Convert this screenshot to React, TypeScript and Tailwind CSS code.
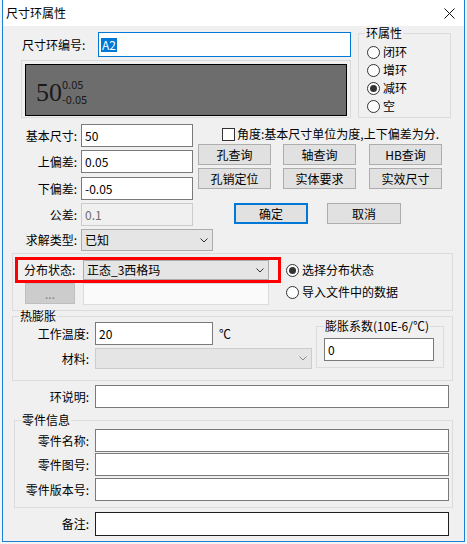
import React from 'react';

const Chevron: React.FC<{ color?: string }> = ({ color = '#333333' }) => (
  <svg width="8" height="5" viewBox="0 0 8 5" className="shrink-0">
    <path d="M0.5 0.5 L4 4 L7.5 0.5" fill="none" stroke={color} strokeWidth="1" />
  </svg>
);

const TextBox: React.FC<{ w: string; h?: string; value?: string; dark?: boolean }> = ({ w, h = 'h-[23px]', value, dark }) => (
  <div
    className={`${w} ${h} shrink-0 flex items-center pl-[3px] bg-white border ${dark ? 'border-[#1e1e1e]' : 'border-[#7a7a7a]'}`}
  >
    {value}
  </div>
);

const Combo: React.FC<{ w: string; h: string; value?: string; disabled?: boolean }> = ({ w, h, value, disabled }) => (
  <div
    className={`${w} ${h} shrink-0 flex items-center justify-between pl-[3px] pr-[4px] border ${
      disabled ? 'bg-[#e5e5e5] border-[#cccccc]' : 'bg-[#e5e5e5] border-[#acacac]'
    }`}
  >
    <span>{value}</span>
    <Chevron color={disabled ? '#8a8a8a' : '#333333'} />
  </div>
);

const Btn: React.FC<{ label: string; w?: string; primary?: boolean; className?: string }> = ({
  label,
  w = 'w-[73px]',
  primary,
  className = '',
}) => (
  <div
    className={`${w} h-[21px] shrink-0 flex items-center justify-center bg-[#e1e1e1] ${
      primary ? 'border-2 border-[#0078d7]' : 'border border-[#adadad]'
    } ${className}`}
  >
    {label}
  </div>
);

const Radio: React.FC<{ label: string; checked?: boolean; h: string }> = ({ label, checked, h }) => (
  <div className={`${h} flex items-center`}>
    <div className="w-[13px] h-[13px] rounded-full border border-[#333333] bg-white flex items-center justify-center shrink-0">
      {checked && <div className="w-[7px] h-[7px] rounded-full bg-[#333333]" />}
    </div>
    <span className="ml-[3px]">{label}</span>
  </div>
);

export default function App() {
  return (
    <div className="w-[467px] h-[544px] bg-[#f4f4f4] overflow-hidden font-['Noto_Sans_CJK_SC',sans-serif] text-[12px] leading-[14px] text-black">
      <div className="ml-[2px] w-[463px] h-[542px] flex flex-col border-x border-b border-[#1a7fd6]">
        {/* title bar */}
        <div className="h-[26px] shrink-0 bg-white flex items-center justify-between pl-[3px] pr-[9px]">
          <span className="text-[12px]">尺寸环属性</span>
          <svg width="11" height="11" viewBox="0 0 11 11">
            <path d="M0.5 0.5 L10.5 10.5 M10.5 0.5 L0.5 10.5" stroke="#111111" strokeWidth="1" />
          </svg>
        </div>

        <div className="flex-1 bg-[#f0f0f0]">
          {/* section A */}
          <div className="flex items-start h-[92px]">
            <div className="ml-[18px] w-[330px] pt-[6px]">
              <div className="flex items-center h-[25px]">
                <span className="w-[77px] pl-[1px] shrink-0">尺寸环编号:</span>
                <div className="w-[253px] h-[25px] border border-[#0078d7] bg-white flex items-center pl-[2px]">
                  <span className="bg-[#0078d7] text-white px-[1px] leading-[14px]">A2</span>
                </div>
              </div>
              <div className="mt-[3px] w-[330px] h-[58px] border border-[#dadada] pt-[3px] px-[3px] pb-[1px]">
                <div className="h-[52px] border border-black bg-[#6d6d6d] flex items-start pl-[10px] pt-[15px] text-[#1a1a1a]">
                  <span className="font-['Liberation_Serif',serif] text-[26px] leading-[26px]">50</span>
                  <div className="flex flex-col -mt-[3px] text-[11px] leading-[15px]">
                    <span>0.05</span>
                    <span>-0.05</span>
                  </div>
                </div>
              </div>
            </div>
            <fieldset className="ml-[7px] w-[93px] h-[92px] border border-[#dcdcdc]">
              <legend className="ml-[6px] px-[1px] leading-[14px]">环属性</legend>
              <div className="mt-[3px] pl-[8px]">
                <Radio h="h-[18px]" label="闭环" />
                <Radio h="h-[18px]" label="增环" />
                <Radio h="h-[18px]" label="减环" checked />
                <Radio h="h-[18px]" label="空" />
              </div>
            </fieldset>
          </div>

          {/* section B */}
          <div className="flex items-start">
            <div className="w-[190px] pt-[6px]">
              <div className="flex items-center">
                <span className="w-[74px] text-right shrink-0">基本尺寸:</span>
                <div className="ml-[4px]"><TextBox w="w-[112px]" value="50" /></div>
              </div>
              <div className="flex items-center mt-[3px]">
                <span className="w-[74px] text-right shrink-0">上偏差:</span>
                <div className="ml-[4px]"><TextBox w="w-[112px]" value="0.05" /></div>
              </div>
              <div className="flex items-center mt-[4px]">
                <span className="w-[74px] text-right shrink-0">下偏差:</span>
                <div className="ml-[4px]"><TextBox w="w-[112px]" value="-0.05" /></div>
              </div>
              <div className="flex items-center mt-[3px]">
                <span className="w-[74px] text-right shrink-0">公差:</span>
                <div className="ml-[4px] w-[112px] h-[23px] flex items-center pl-[3px] bg-[#f0f0f0] border border-[#cccccc] text-[#6d6d6d]">
                  0.1
                </div>
              </div>
            </div>
            <div className="ml-[5px] pt-[8px]">
              <div className="h-[16px] flex items-center pl-[24px]">
                <div className="w-[13px] h-[13px] border border-[#333333] bg-white shrink-0" />
                <span className="ml-[2px] whitespace-nowrap">角度:基本尺寸单位为度,上下偏差为分.</span>
              </div>
              <div className="flex mt-[2px]">
                <Btn label="孔查询" />
                <Btn label="轴查询" className="ml-[12px]" />
                <Btn label="HB查询" className="ml-[13px]" />
              </div>
              <div className="flex mt-[3px]">
                <Btn label="孔销定位" />
                <Btn label="实体要求" className="ml-[12px]" />
                <Btn label="实效尺寸" className="ml-[13px]" />
              </div>
              <div className="flex mt-[14px]">
                <Btn label="确定" w="w-[74px]" primary className="ml-[36px]" />
                <Btn label="取消" w="w-[74px]" className="ml-[19px]" />
              </div>
            </div>
          </div>

          <div className="flex items-center mt-[3px]">
            <span className="w-[74px] text-right shrink-0">求解类型:</span>
            <div className="ml-[4px]"><Combo w="w-[132px]" h="h-[22px]" value="已知" /></div>
          </div>

          {/* section C */}
          <div className="mt-[2px] ml-[9px] w-[441px] h-[58px] border border-[#dcdcdc] flex items-start pl-[2px] pt-[3px]">
            <div>
              <div className="w-[266px] h-[26px] border-[3px] border-[#ff0000] flex items-center">
                <span className="w-[65px] pl-[6px] shrink-0">分布状态:</span>
                <Combo w="w-[186px]" h="h-[20px]" value="正态_3西格玛" />
              </div>
              <div className="flex items-start">
                <div className="ml-[10px] w-[50px] h-[21px] bg-[#cccccc] border border-[#bfbfbf] flex items-center justify-center text-[#838383]">
                  ...
                </div>
                <div className="ml-[8px] w-[186px] h-[22px] bg-[#fafafa] border border-[#dcdcdc]" />
              </div>
            </div>
            <div className="ml-[5px] pt-[2px]">
              <Radio h="h-[22px]" label="选择分布状态" checked />
              <Radio h="h-[22px]" label="导入文件中的数据" />
            </div>
          </div>

          {/* section D */}
          <fieldset className="ml-[9px] w-[441px] h-[70px] border border-[#dcdcdc]">
            <legend className="ml-[6px] px-[1px] leading-[10px]">热膨胀</legend>
            <div className="flex items-start">
              <div className="w-[299px]">
                <div className="flex items-center mt-[1px]">
                  <span className="w-[76px] text-right shrink-0">工作温度:</span>
                  <div className="ml-[6px]"><TextBox w="w-[118px]" value="20" /></div>
                  <span className="ml-[6px]">℃</span>
                </div>
                <div className="flex items-center mt-[3px]">
                  <span className="w-[76px] text-right shrink-0">材料:</span>
                  <div className="ml-[6px]"><Combo w="w-[217px]" h="h-[21px]" disabled /></div>
                </div>
              </div>
              <fieldset className="ml-[4px] w-[128px] h-[47px] border border-[#dcdcdc]">
                <legend className="ml-[7px] px-[1px] leading-[10px] whitespace-nowrap">膨胀系数(10E-6/℃)</legend>
                <div className="mt-[7px] ml-[7px]"><TextBox w="w-[110px]" value="0" /></div>
              </fieldset>
            </div>
          </fieldset>

          {/* section E */}
          <div className="flex items-center mt-[4px]">
            <span className="w-[86px] text-right shrink-0">环说明:</span>
            <div className="ml-[6px]"><TextBox w="w-[354px]" /></div>
          </div>

          {/* section F */}
          <fieldset className="mt-[7px] ml-[11px] w-[439px] h-[93px] border border-[#dcdcdc]">
            <legend className="ml-[6px] px-[1px] leading-[10px]">零件信息</legend>
            <div className="flex items-center mt-[4px]">
              <span className="w-[74px] text-right shrink-0">零件名称:</span>
              <div className="ml-[6px]"><TextBox w="w-[354px]" /></div>
            </div>
            <div className="flex items-center mt-[1px]">
              <span className="w-[74px] text-right shrink-0">零件图号:</span>
              <div className="ml-[6px]"><TextBox w="w-[354px]" /></div>
            </div>
            <div className="flex items-center mt-[2px]">
              <span className="w-[74px] text-right shrink-0">零件版本号:</span>
              <div className="ml-[6px]"><TextBox w="w-[354px]" /></div>
            </div>
          </fieldset>

          {/* section G */}
          <div className="flex items-center mt-[4px]">
            <span className="w-[86px] text-right shrink-0">备注:</span>
            <div className="ml-[6px]"><TextBox w="w-[354px]" h="h-[24px]" dark /></div>
          </div>
        </div>
      </div>
    </div>
  );
}
